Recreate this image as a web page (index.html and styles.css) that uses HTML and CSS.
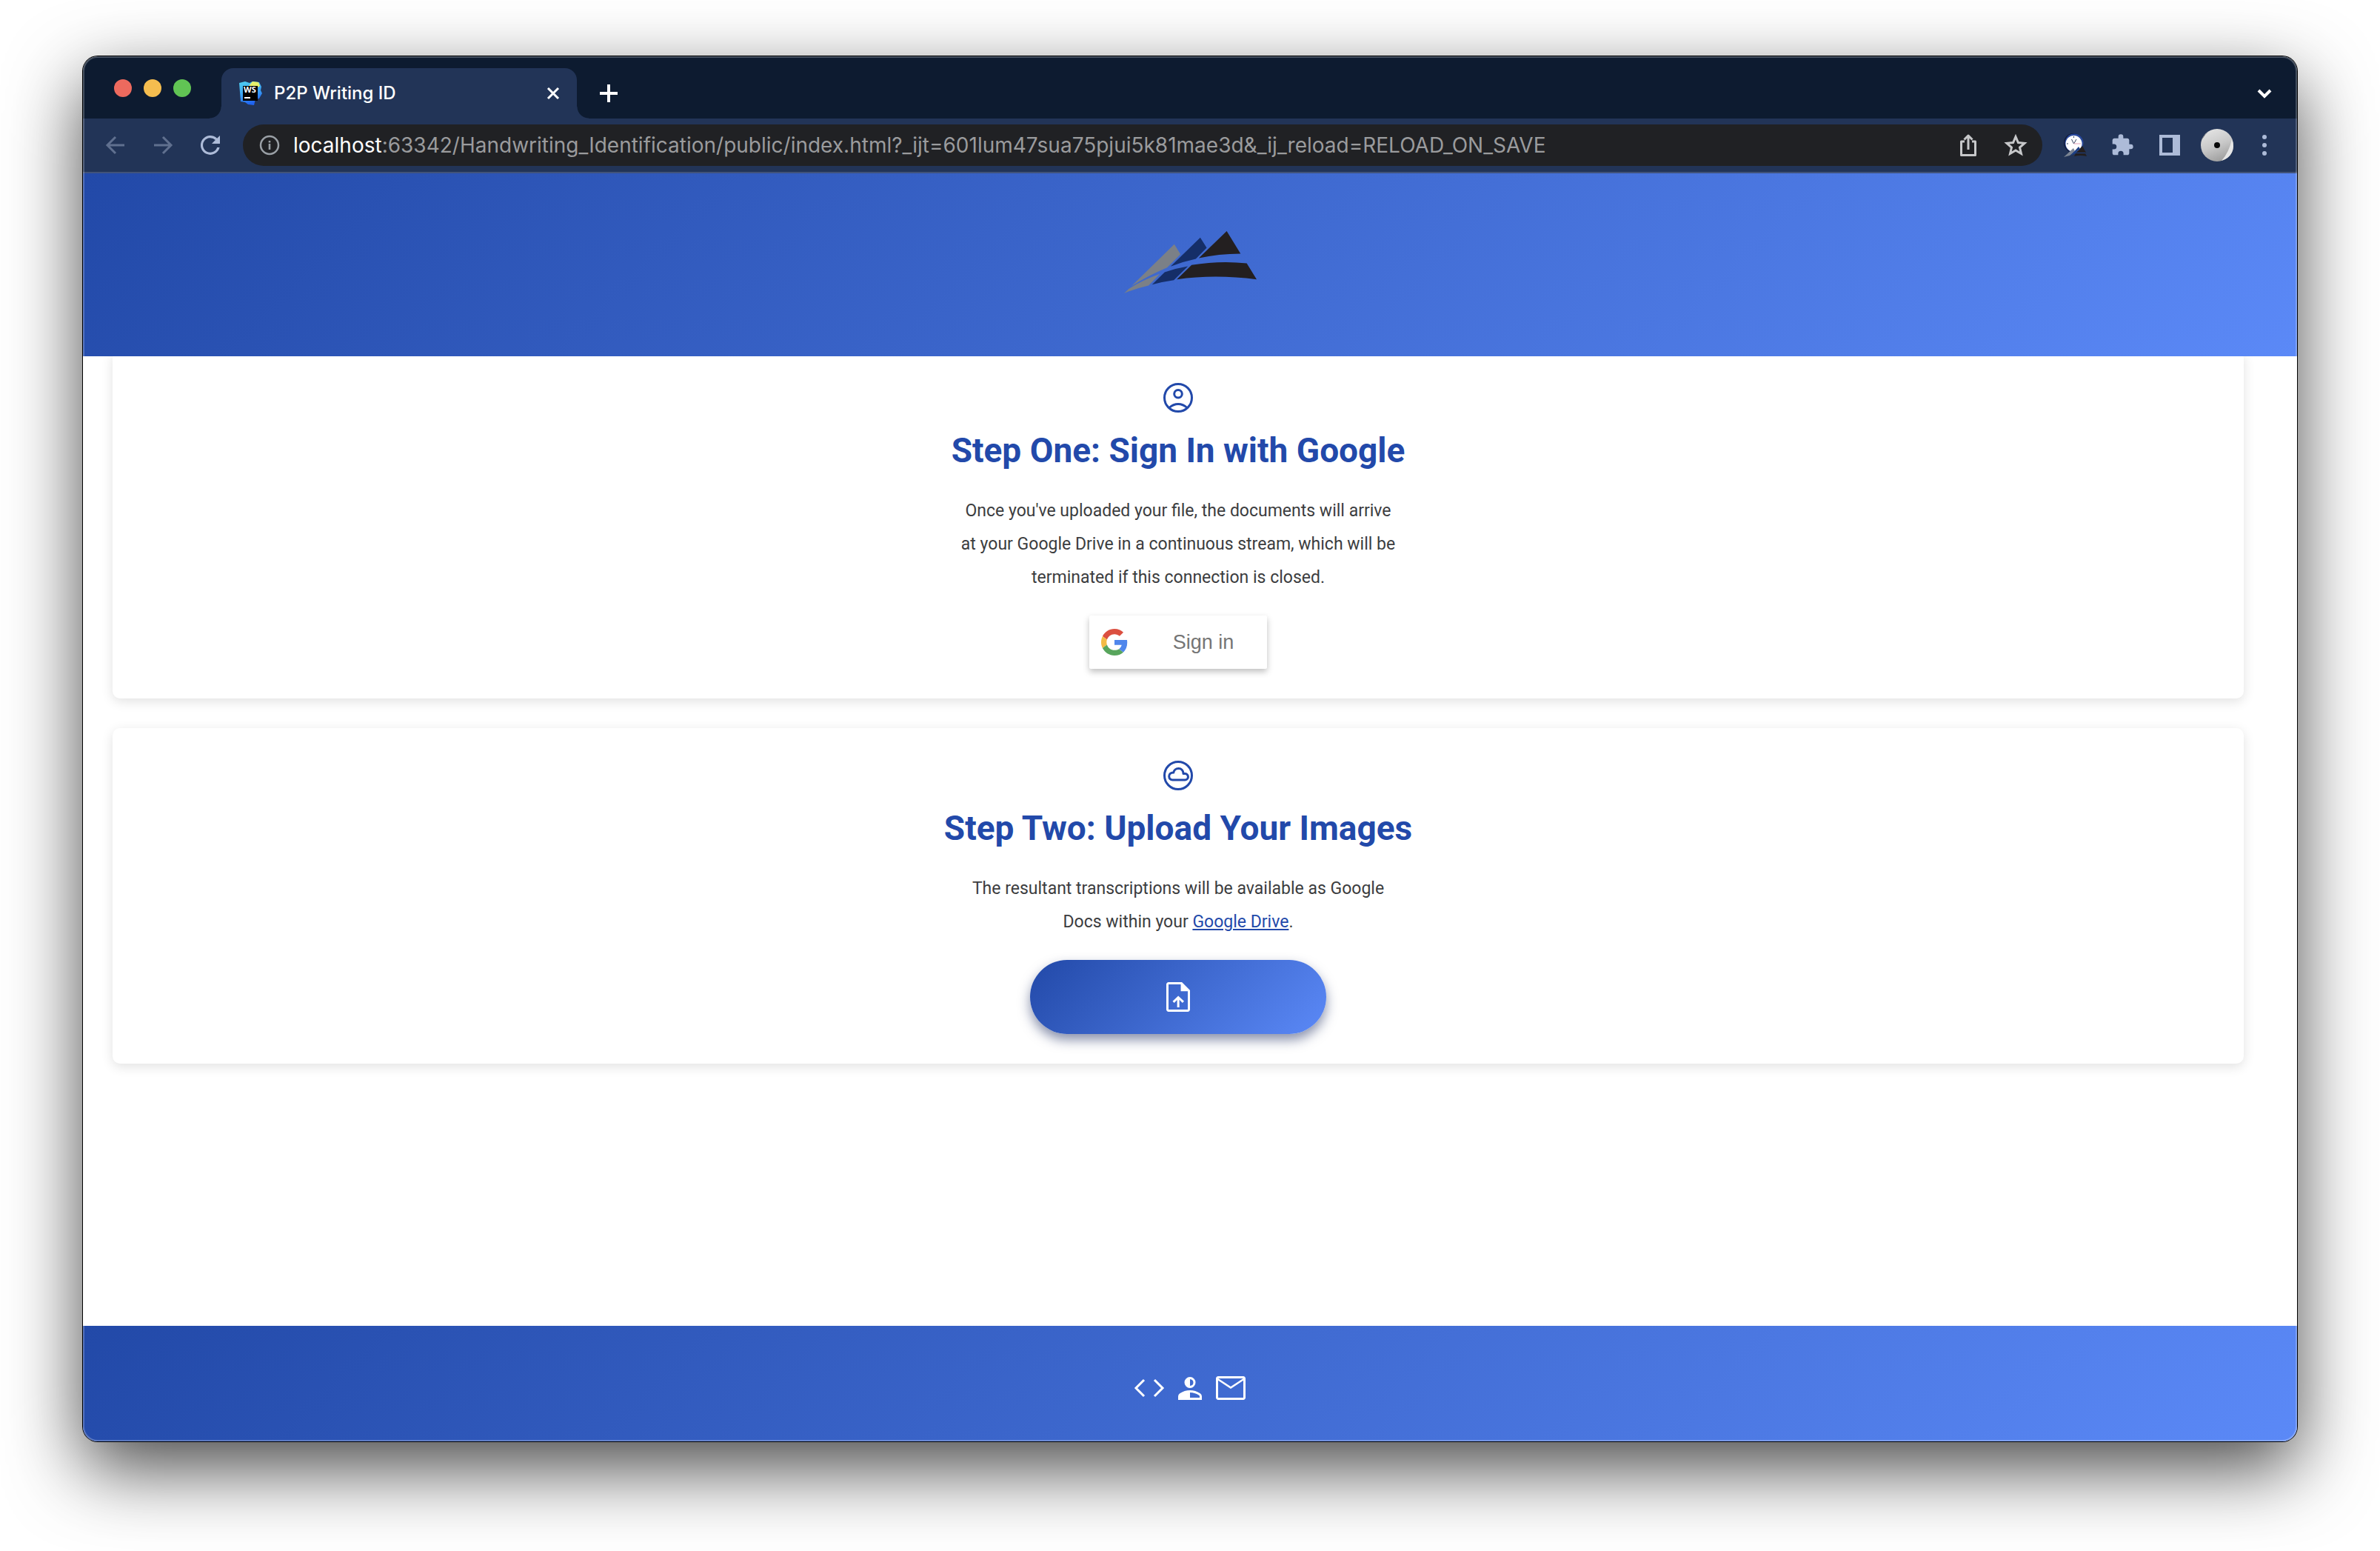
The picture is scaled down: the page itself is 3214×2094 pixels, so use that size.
FILE: index.html
```html
<!DOCTYPE html>
<html lang="en">
<head>
<meta charset="utf-8">
<title>P2P Writing ID</title>
<link rel="stylesheet" href="styles.css">
</head>
<body>
<div class="window">
  <div class="tabstrip">
    <div class="lights"><span class="light red"></span><span class="light yellow"></span><span class="light green"></span></div>
    <div class="tab">
      <svg class="favicon" viewBox="0 0 32 32" aria-hidden="true">
        <defs><linearGradient id="ws" x1="0" y1="0" x2="0.3" y2="1"><stop offset="0" stop-color="#4fd0f0"/><stop offset="0.6" stop-color="#3aa0f5"/><stop offset="1" stop-color="#1f62f0"/></linearGradient></defs>
        <path fill="url(#ws)" d="M1 2 9 0l6 2 4-2 9 1 3 6-1 5 2 4-4 7-5 1-2 8-8-1-4-3-6-1z"/>
        <path fill="#e6f06a" d="m14 6 5-6 8 1 2 5-3 2z"/>
        <path d="M6 6h20v20H6z"/>
        <text x="7" y="15" class="favicon-text">WS</text>
        <path fill="#fff" d="M8 21h8v2H8z"/>
      </svg>
      <span class="tab-title">P2P Writing ID</span>
      <button class="icon-button" aria-label="Close tab"><svg class="i24" viewBox="0 0 24 24"><path class="line-white" d="M5 5l14 14M19 5 5 19"/></svg></button>
    </div>
    <button class="icon-button new-tab" aria-label="New tab"><svg class="i24" viewBox="0 0 24 24"><path class="line-white thick" d="M12 0v24M0 12h24"/></svg></button>
    <button class="icon-button tab-search" aria-label="Search tabs"><svg class="i24" viewBox="0 0 24 24"><path class="line-white thick" d="m4 8 8 8 8-8"/></svg></button>
  </div>
  <div class="toolbar">
    <div class="nav">
      <button class="icon-button dim" aria-label="Back"><svg class="i32" viewBox="0 0 32 32"><path d="M28 16H5M16 5 5 16l11 11"/></svg></button>
      <button class="icon-button dim" aria-label="Forward"><svg class="i32" viewBox="0 0 32 32"><path d="M4 16h23M16 5l11 11-11 11"/></svg></button>
      <button class="icon-button" aria-label="Reload"><svg class="i32" viewBox="0 0 32 32"><path class="tool-fill" d="M25.200 6.800A13 13 0 1 0 28.600 19h-3.400A9.800 9.800 0 1 1 22.900 9.100L18 14h11V3z"/></svg></button>
    </div>
    <div class="omnibox">
      <svg class="i32" viewBox="0 0 32 32" aria-hidden="true"><circle cx="16" cy="16" r="12" fill="none" stroke="#9aa0a6" stroke-width="2.500"/><path fill="#9aa0a6" d="M14.700 14h2.600v8h-2.600zM14.700 10h2.600v2.600h-2.600z"/></svg>
      <p class="url"><span class="host">localhost</span>:63342/Handwriting_Identification/public/index.html?_ijt=601lum47sua75pjui5k81mae3d&amp;_ij_reload=RELOAD_ON_SAVE</p>
      <button class="icon-button omni" aria-label="Share"><svg class="i32" viewBox="0 0 32 32"><path d="M11 11H6.500v18.500h19V11H21M16 22V3M10.500 8.500 16 3l5.500 5.500" stroke-linejoin="round"/></svg></button>
      <button class="icon-button omni" aria-label="Bookmark"><svg class="i32" viewBox="0 0 32 32"><path d="m16 4.500 3.400 8 8.600.8-6.500 5.700 2 8.500-7.500-4.500-7.500 4.500 2-8.500L4 13.300l8.600-.8z"/></svg></button>
    </div>
    <div class="extensions">
      <button class="icon-button" aria-label="Clock extension"><svg class="i32" viewBox="0 0 32 32"><circle cx="14" cy="13" r="13" fill="#101a3a"/><circle cx="15" cy="13" r="12.500" fill="#2a4a9c"/><circle cx="14.500" cy="14" r="11" fill="#fff"/><path fill="none" stroke="#33415f" stroke-width="1" d="m11.500 8 3 6 3.500-6M14.500 4v2M5 14h2"/><path fill="none" stroke="#e0a0b8" stroke-width="1" d="M14.500 14H24"/><path fill="#231f20" d="m26 17 5 9H18zM17 27l13 0 2 4q-9-2-17 0z"/><path fill="#7b8492" d="m1 32 13-12 2 4-7 6z"/><path fill="#1c3f86" d="m10 30 11-12 2 3-6 5h13v1H17z"/></svg></button>
      <button class="icon-button" aria-label="Extensions"><svg class="i32" viewBox="0 0 24 24"><path class="tool-fill" d="M20.500 11H19V7c0-1.100-.9-2-2-2h-4V3.500a2.500 2.500 0 0 0-5 0V5H4c-1.100 0-2 .9-2 2v3.800h1.500a2.700 2.700 0 0 1 0 5.400H2V20c0 1.100.9 2 2 2h3.800v-1.500a2.700 2.700 0 0 1 5.400 0V22H17c1.100 0 2-.9 2-2v-4h1.500a2.500 2.500 0 0 0 0-5z"/></svg></button>
      <button class="icon-button" aria-label="Side panel"><svg class="i32" viewBox="0 0 32 32"><path class="tool-fill" fill-rule="evenodd" d="M2 2h28v28H2zm4 4v20h14V6z"/></svg></button>
      <button class="icon-button profile" aria-label="Profile"><svg class="avatar" viewBox="0 0 44 44"><defs><linearGradient id="av" x1="0.3" y1="0" x2="0.7" y2="1"><stop offset="0" stop-color="#e2e2e2"/><stop offset="0.500" stop-color="#c8c8c8"/><stop offset="1" stop-color="#9a9a9a"/></linearGradient></defs><circle cx="22" cy="22" r="22" fill="url(#av)"/><path fill="#111" d="M1 16A22 22 0 0 1 10 4 30 30 0 0 0 1 16z"/><path fill="#e6e6e6" d="M28 43Q38 32 42 14q4 10 0 18-4 8-14 11z"/><circle cx="22" cy="22" r="4" fill="#0a0a0a"/></svg></button>
      <button class="icon-button" aria-label="Menu"><svg class="i32" viewBox="0 0 32 32"><g class="tool-fill"><circle cx="16" cy="5" r="3"/><circle cx="16" cy="16" r="3"/><circle cx="16" cy="27" r="3"/></g></svg></button>
    </div>
  </div>
  <div class="page">
    <header class="site-header">
      <svg class="logo" viewBox="113 95 536 251" role="img" aria-label="P2P logo">
        <path fill="#7b8087" d="M316 148 341 188 287 242Q205 277 143 317zM113 346 132 328Q190 292 258 268L212 315Q160 327 113 346z"/>
        <path fill="#152e68" d="M421 121 447 162 403 207Q350 218 301 238zM226 311 277 261Q322 245 371 237L314 293Q270 299 226 311z"/>
        <path fill="#231f20" d="M528 95 584 186Q495 186 415 204zM326 290 386 232Q500 213 609 225L649 290Q480 268 326 290z"/>
      </svg>
    </header>
    <main class="steps">
      <section class="card">
        <svg class="i48" viewBox="0 0 48 48" aria-hidden="true"><g fill="none" stroke="#2249aa" stroke-width="3"><circle cx="24" cy="24" r="18.500"/><circle cx="24" cy="18.700" r="5.300"/><path d="M12 37.500Q17.500 32.500 24 32.500T36 37.500"/></g></svg>
        <h2>Step One: Sign In with Google</h2>
        <p class="copy">Once you've uploaded your file, the documents will arrive<br>at your Google Drive in a continuous stream, which will be<br>terminated if this connection is closed.</p>
        <button class="google">
          <svg class="g" viewBox="0 0 48 48" aria-hidden="true"><path fill="#db4f40" d="M24 9.500c3.540 0 6.710 1.220 9.210 3.600l6.850-6.850C35.900 2.380 30.470 0 24 0 14.620 0 6.510 5.380 2.560 13.220l7.980 6.190C12.430 13.720 17.740 9.500 24 9.500z"/><path fill="#4f86ec" d="M46.980 24.550c0-1.570-.15-3.090-.38-4.550H24v9.020h12.940c-.58 2.960-2.260 5.480-4.780 7.180l7.730 6c4.510-4.180 7.090-10.360 7.090-17.650z"/><path fill="#f3bb45" d="M10.530 28.590c-.48-1.450-.76-2.990-.76-4.590s.27-3.140.76-4.590l-7.980-6.190C.92 16.460 0 20.120 0 24c0 3.880.92 7.540 2.560 10.780l7.970-6.190z"/><path fill="#58a55c" d="M24 48c6.480 0 11.930-2.130 15.890-5.810l-7.730-6c-2.150 1.450-4.920 2.300-8.160 2.300-6.260 0-11.570-4.220-13.470-9.910l-7.980 6.190C6.510 42.620 14.620 48 24 48z"/></svg>
          <span class="google-label">Sign in</span>
        </button>
      </section>
      <section class="card">
        <svg class="i48" viewBox="0 0 48 48" aria-hidden="true"><g fill="none" stroke="#2249aa" stroke-width="3" stroke-linejoin="round"><circle cx="24" cy="24" r="18.500"/><path d="M16.500 30H33a4.200 4.200 0 0 0 .5-8.400H31c0-4.600-3-7.100-6.500-7.100-3.600 0-6.200 2.500-6.800 5.600-3.700 0-6 2-6 5 0 2.900 2 4.900 4.800 4.900z"/></g></svg>
        <h2>Step Two: Upload Your Images</h2>
        <p class="copy">The resultant transcriptions will be available as Google<br>Docs within your <a href="#drive">Google Drive</a>.</p>
        <button class="upload" aria-label="Upload file"><svg class="i48" viewBox="0 0 48 48"><path fill="#fff" d="M22.650 38h3V27.750l4.200 4.200L32 29.800 24.150 22.500 16.500 29.800l2.150 2.150 4-4zM11 44q-1.200 0-2.100-.9Q8 42.200 8 41V7q0-1.200.9-2.100Q9.800 4 11 4h18.050L40 14.950V41q0 1.200-.9 2.100-.9.900-2.100.9zm16.550-27.700V7H11v34h26V16.300z"/></svg></button>
      </section>
    </main>
    <footer class="site-footer">
      <a href="#code" aria-label="Source code"><svg class="i48" viewBox="0 0 48 48"><path fill="none" stroke="#fff" stroke-width="3" d="M17 13 6 24l11 11M31 13l11 11-11 11"/></svg></a>
      <a href="#about" aria-label="About"><svg class="i48" viewBox="0 0 48 48"><path fill="#fff" fill-rule="evenodd" d="M24 9a7.500 7.500 0 0 1 0 15 7.500 7.500 0 0 1 0-15zm0 3v9q4.500-.5 4.500-4.500T24 12zM8 40v-4.700q0-2.500 2.200-4Q16.500 27 24 27t13.800 4.300q2.200 1.500 2.200 4V40zm16-10v7h13v-1.700q0-1-1.200-1.800Q30.500 30 24 30z"/></svg></a>
      <a href="#mail" aria-label="Email"><svg class="i48" viewBox="0 0 48 48"><path fill="#fff" d="M7 40q-1.200 0-2.100-.9Q4 38.200 4 37V11q0-1.200.9-2.100Q5.800 8 7 8h34q1.200 0 2.100.9.900.9.900 2.100v26q0 1.200-.9 2.100-.9.900-2.100.9zm17-15.100L7 13.750V37h34V13.750zm0-3L40.800 11H7.250zM7 13.750V11v26z"/></svg></a>
    </footer>
  </div>
</div>
</body>
</html>
```
FILE: styles.css
```css
* { box-sizing: border-box; }
body {
  margin: 0;
  min-height: 100vh;
  padding: 76px 112px 148px;
  display: flex;
  background: #fff;
  font-family: Roboto, sans-serif;
}
h2, p { margin: 0; }
svg { display: block; flex: none; }
button { font: inherit; border: 0; padding: 0; background: none; }
.i24 { width: 24px; height: 24px; }
.i32 { width: 32px; height: 32px; }
.i48 { width: 48px; height: 48px; }

.window {
  position: relative;
  flex: 1;
  min-width: 0;
  display: flex;
  flex-direction: column;
  overflow: hidden;
  border-radius: 20px;
  background: #fff;
  box-shadow: 0 0 0 1px #000, 0 36px 100px rgba(0, 0, 0, .72);
}
.window::after {
  content: "";
  position: absolute;
  inset: 0;
  z-index: 5;
  border-radius: 20px;
  box-shadow: inset 0 0 0 2px rgba(255, 255, 255, .24);
  pointer-events: none;
}

/* Browser chrome */
.tabstrip {
  height: 84px;
  padding: 16px 32px 0 42px;
  display: flex;
  background: #0d1b30;
}
.lights { display: flex; gap: 16px; padding-top: 15px; width: 145px; }
.light { width: 24px; height: 24px; border-radius: 50%; }
.red { background: #ed6a5e; }
.yellow { background: #f5bd4f; }
.green { background: #61c454; }
.tab {
  position: relative;
  width: 480px;
  padding: 0 20px 0 23px;
  display: flex;
  align-items: center;
  gap: 16px;
  border-radius: 16px 16px 0 0;
  background: #223457;
}
.tab::before, .tab::after {
  content: "";
  position: absolute;
  bottom: 0;
  width: 16px;
  height: 16px;
}
.tab::before { left: -16px; background: radial-gradient(circle at 0 0, #0d1b30 15px, #223457 16px); }
.tab::after { right: -16px; background: radial-gradient(circle at 100% 0, #0d1b30 15px, #223457 16px); }
.favicon { width: 32px; height: 32px; }
.favicon-text { font: 700 11px "Open Sans", sans-serif; fill: #fff; }
.tab-title { flex: 1; font: 500 24px/32px Inter, sans-serif; color: #fff; }
.icon-button { display: flex; align-items: center; justify-content: center; color: #adbbd8; }
.icon-button path:not([fill]) { fill: none; stroke: currentColor; stroke-width: 3; }
.icon-button path.line-white { stroke: #fff; }
.icon-button path.thick { stroke-width: 4; }
.new-tab { margin-left: 31px; }
.tab-search { margin-left: auto; }
.icon-button.dim { color: #60708f; }
g.tool-fill { fill: #adbbd8; }
.icon-button path.tool-fill:not([fill]) { fill: #adbbd8; stroke: none; }

.toolbar {
  height: 74px;
  padding: 0 28px;
  display: flex;
  align-items: center;
  background: #223457;
  border-bottom: 2px solid #41537a;
}
.nav { display: flex; gap: 32px; width: 188px; }
.omnibox {
  flex: 1;
  min-width: 0;
  height: 56px;
  padding: 0 20px;
  display: flex;
  align-items: center;
  border-radius: 28px;
  background: #202124;
}
.url {
  flex: 1;
  min-width: 0;
  margin-left: 16px;
  font: 28px/40px Inter, sans-serif;
  color: #9a9b9d;
  white-space: nowrap;
}
.host { color: #fff; }
.icon-button.omni { margin-left: 32px; color: #c7c8ca; }
.extensions { display: flex; align-items: center; gap: 32px; padding-left: 28px; }
.profile { margin: 0 -6px; }
.avatar { width: 44px; height: 44px; }

/* Page */
.page { flex: 1; display: flex; flex-direction: column; }
.site-header, .site-footer, .upload { background: linear-gradient(135deg, #2249a8, #5b89f7); }
.site-header {
  position: relative;
  z-index: 1;
  height: 247px;
  padding-top: 78px;
}
.logo { width: 179px; height: 84px; margin: 0 auto; }
.steps {
  flex: 1;
  margin: -8px 72px 0 40px;
  display: flex;
  flex-direction: column;
  gap: 40px;
}
.card {
  padding: 40px;
  display: flex;
  flex-direction: column;
  align-items: center;
  border-radius: 10px;
  background: #fff;
  box-shadow: 0 4px 16px rgba(0, 0, 0, .12);
}
h2 {
  margin-top: 15px;
  font-size: 46px;
  line-height: 64px;
  font-weight: 700;
  color: #2249aa;
}
.copy {
  margin: 27px 0 29px;
  font-size: 23px;
  line-height: 45px;
  color: #3c3d40;
  text-align: center;
}
.copy a { color: #2249aa; }
.google {
  width: 240px;
  height: 72px;
  padding: 0 16px;
  display: flex;
  align-items: center;
  border-radius: 2px;
  background: #fff;
  box-shadow: 0 4px 8px rgba(0, 0, 0, .25);
}
.g { width: 36px; height: 36px; }
.google-label {
  flex: 1;
  padding-left: 32px;
  font: 27px/36px "Liberation Sans", sans-serif;
  color: #757575;
}
.upload {
  width: 400px;
  height: 100px;
  display: flex;
  align-items: center;
  justify-content: center;
  border-radius: 50px;
  box-shadow: 0 8px 16px rgba(20, 35, 90, .5);
}
.site-footer {
  height: 156px;
  padding-top: 60px;
  display: flex;
  justify-content: center;
  gap: 7px;
}
```
